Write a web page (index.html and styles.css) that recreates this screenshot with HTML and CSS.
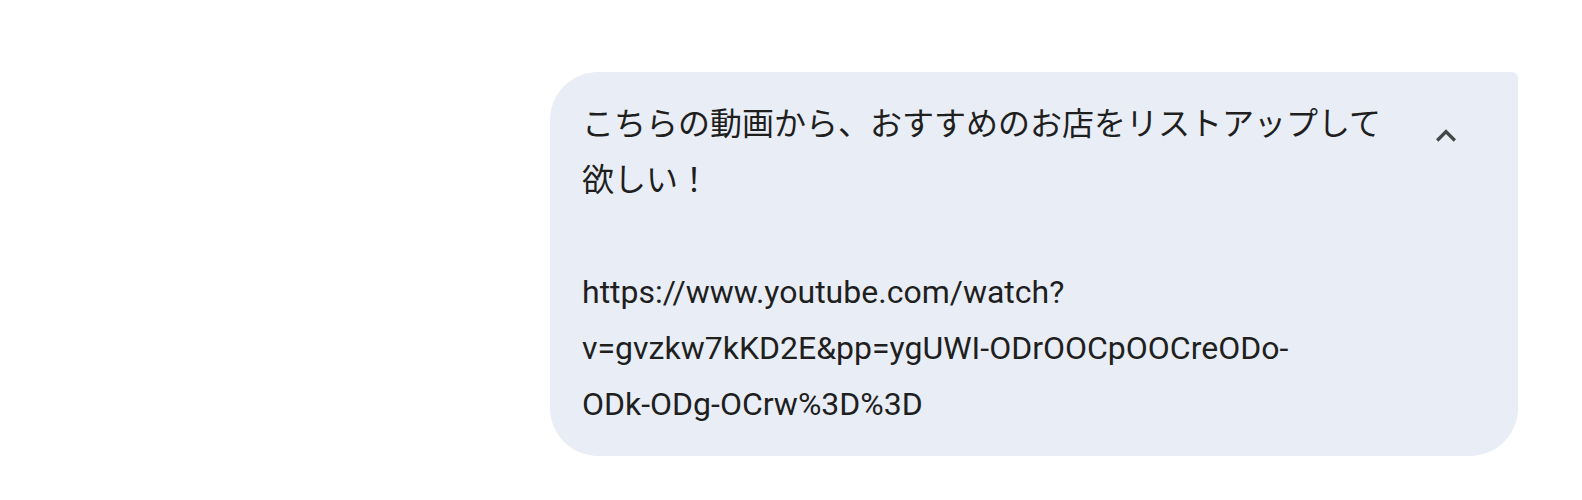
FILE: index.html
```html
<!DOCTYPE html>
<html lang="ja">
<head>
<meta charset="utf-8">
<title>Query</title>
<link rel="stylesheet" href="styles.css">
</head>
<body>
<div class="page">
  <div class="bubble">
    <p class="query">こちらの動画から、おすすめのお店をリストアップして欲しい！<br><br>https://www.youtube.com/watch?<wbr>v=gvzkw7kKD2E&amp;pp=ygUWI-ODrOOCpOOCreODo-<br>ODk-ODg-OCrw%3D%3D</p>
    <button class="toggle" aria-label="折りたたむ">
      <svg class="chev" viewBox="0 -960 960 960" width="40" height="40"><path d="M480-528 296-344l-56-56 240-240 240 240-56 56-184-184Z"/></svg>
    </button>
  </div>
</div>
</body>
</html>
```
FILE: styles.css
```css
html, body {
  margin: 0;
  padding: 0;
  background: #ffffff;
}
.page {
  display: flex;
  justify-content: flex-end;
  padding: 72px 64px 0 0;
}
.bubble {
  display: flex;
  align-items: flex-start;
  gap: 8px;
  background: #e9eef6;
  border-radius: 48px 6px 48px 48px;
  padding: 24px 32px;
}
.query {
  flex: 0 0 816px;
  width: 816px;
  margin: 0;
  font-family: Roboto, "Noto Sans CJK JP", sans-serif;
  font-size: 32px;
  line-height: 56px;
  color: #1f1f1f;
  overflow-wrap: break-word;
}
.toggle {
  flex: 0 0 80px;
  width: 80px;
  height: 80px;
  padding: 0;
  margin: 0;
  border: none;
  background: transparent;
  display: flex;
  align-items: center;
  justify-content: center;
}
.chev {
  display: block;
  fill: #444746;
}
```
